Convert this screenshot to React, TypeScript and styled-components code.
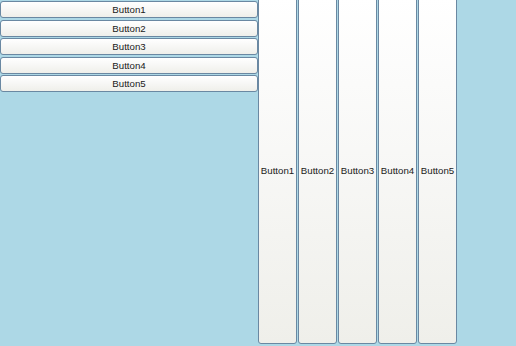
import React from "react";
import styled, { createGlobalStyle } from "styled-components";

const Global = createGlobalStyle`
  html, body { margin: 0; padding: 0; background: #add8e6; overflow: hidden; }
  body { font-family: "Liberation Sans", Arial, sans-serif; }
`;

const Page = styled.div`
  display: flex;
  align-items: flex-start;
  width: 516px;
  height: 346px;
  overflow: hidden;
  background: #add8e6;
`;

const Stack = styled.div`
  display: flex;
  flex-direction: column;
  gap: 1.5px;
  width: 258px;
  padding-top: 1px;
`;

const Row = styled.div`
  display: flex;
  gap: 1px;
  margin-top: -3px;
`;

const Btn = styled.button<{ $vertical?: boolean }>`
  box-sizing: border-box;
  margin: 0;
  padding: 0;
  display: flex;
  align-items: center;
  justify-content: center;
  font-family: "Liberation Sans", Arial, sans-serif;
  font-size: 9.7px;
  color: #202020;
  border: 1px solid #6a88a2;
  border-radius: 3px;
  background: linear-gradient(to bottom, #ffffff 0%, #f7f7f5 50%, #efefea 100%);
  width: ${(p) => (p.$vertical ? "39px" : "258px")};
  height: ${(p) => (p.$vertical ? "347px" : "17px")};
`;

const labels = ["Button1", "Button2", "Button3", "Button4", "Button5"];

export default function App() {
  return (
    <>
      <Global />
      <Page>
        <Stack>
          {labels.map((l) => (
            <Btn key={l}>{l}</Btn>
          ))}
        </Stack>
        <Row>
          {labels.map((l) => (
            <Btn key={l} $vertical>
              {l}
            </Btn>
          ))}
        </Row>
      </Page>
    </>
  );
}
